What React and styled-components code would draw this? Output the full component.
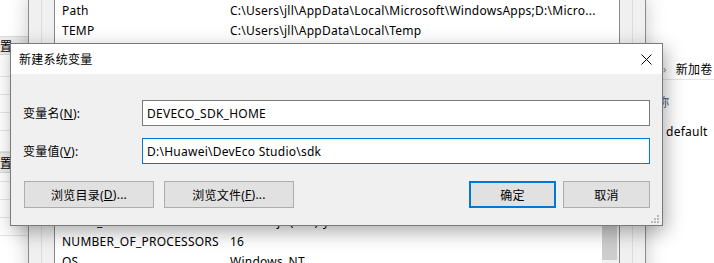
import React from "react";
import styled, { createGlobalStyle } from "styled-components";

const UI = '"Noto Sans", "Noto Sans CJK SC", sans-serif';

const Global = createGlobalStyle`
  html, body { margin: 0; padding: 0; background: #fff; }
  body { font-family: ${UI}; font-size: 12px; color: #000; letter-spacing: 0.25px; }
  * { box-sizing: border-box; }
`;

const Desktop = styled.div`
  position: relative;
  width: 714px;
  height: 263px;
  overflow: hidden;
  background: #fff;
`;

/* ---------- left background window ---------- */
const SideWindow = styled.div`
  position: absolute;
  left: 0;
  top: 0;
  width: 40px;
  height: 263px;
  background: #fff;
  display: flex;
  flex-direction: column;
  padding-top: 36px;
`;

const SideHeader = styled.div`
  height: ${(p) => p.h}px;
  flex: none;
  background: #ececec;
  border-top: 1px solid #d9d9d9;
  border-bottom: 1px solid #d9d9d9;
  display: flex;
  align-items: center;
  gap: 6px;
  font-size: 12px;
  color: #000;
`;

const SideDots = styled.span`
  width: 2px;
  height: 6px;
  border-left: 1px dotted #999;
`;

const SideRow = styled.div`
  height: ${(p) => p.h}px;
  flex: none;
  border-bottom: 1px solid #e6e6e6;
`;

/* ---------- environment variables window ---------- */
const EnvWindow = styled.div`
  position: absolute;
  left: 28px;
  top: -3px;
  width: 618px;
  height: 290px;
  background: #f0f0f0;
  border-left: 1px solid #8c8c8c;
  border-right: 1px solid #8c8c8c;
  box-shadow: 0 0 18px rgba(0, 0, 0, 0.22);
  padding: 0 12px;
  display: flex;
`;

const Group = styled.div`
  flex: 1;
  border-left: 1px solid #dcdcdc;
  border-right: 1px solid #dcdcdc;
  padding: 2px 12px 0 12px;
  display: flex;
  flex-direction: column;
  gap: 49px;
`;

const ListBox = styled.div`
  height: ${(p) => p.h}px;
  flex: none;
  background: #fff;
  border: 1px solid #828790;
  display: flex;
  overflow: hidden;
`;

const Rows = styled.div`
  flex: 1;
  display: flex;
  flex-direction: column;
`;

const Row = styled.div`
  height: 20px;
  flex: none;
  display: flex;
  align-items: center;
  padding-left: 7px;
  white-space: nowrap;
  font-size: 12px;
`;

const NameCell = styled.span`
  width: 168px;
  flex: none;
`;

const ValueCell = styled.span`
  flex: 1;
  overflow: hidden;
`;

const ScrollBar = styled.div`
  width: 17px;
  flex: none;
  background: #f0f0f0;
  display: flex;
  flex-direction: column;
  padding-top: 39px;
`;

const Thumb = styled.div`
  width: 15px;
  height: 70px;
  background: #cdcdcd;
`;

/* ---------- explorer window (right) ---------- */
const Explorer = styled.div`
  position: absolute;
  left: 645px;
  top: 0;
  width: 90px;
  height: 263px;
  background: #fff;
  display: flex;
  flex-direction: column;
  padding-top: 58px;
`;

const Crumb = styled.div`
  height: 22px;
  flex: none;
  display: flex;
  align-items: center;
  gap: 9px;
  padding-left: 18px;
  border-bottom: 1px solid #e5e5e5;
  white-space: nowrap;
  font-size: 12px;
`;

const CrumbArrow = styled.span`
  color: #8a8a8a;
  font-size: 11px;
`;

const ColHeader = styled.div`
  height: 26px;
  margin-top: 9px;
  flex: none;
  display: flex;
  align-items: center;
  padding-left: 0;
  color: #4c607a;
  font-size: 12px;
  white-space: nowrap;
`;

const FileRow = styled.div`
  height: 24px;
  margin-top: 4px;
  flex: none;
  display: flex;
  align-items: center;
  padding-left: 21px;
  font-size: 12px;
`;

/* ---------- dialog ---------- */
const Dialog = styled.div`
  position: absolute;
  left: 10px;
  top: 43px;
  width: 653px;
  height: 183px;
  border: 1px solid #7a7a7a;
  background: #f0f0f0;
  box-shadow: 3px 6px 18px rgba(0, 0, 0, 0.32);
  display: flex;
  flex-direction: column;
`;

const TitleBar = styled.div`
  height: 30px;
  flex: none;
  background: #fff;
  display: flex;
  align-items: center;
  justify-content: space-between;
  padding: 0 10px 0 8px;
  font-size: 12px;
`;

const Body = styled.div`
  flex: 1;
  display: flex;
  flex-direction: column;
  padding: 26px 12px 0 12px;
`;

const FieldRow = styled.div`
  display: flex;
  align-items: center;
  height: 26px;
  margin-bottom: ${(p) => p.mb || 0}px;
`;

const Label = styled.label`
  width: 119px;
  flex: none;
  font-size: 12px;
`;

const Input = styled.div`
  flex: 1;
  height: 26px;
  background: #fff;
  border: 1px solid ${(p) => (p.focused ? "#0078d7" : "#7a7a7a")};
  display: flex;
  align-items: center;
  padding-left: 4px;
  font-size: 12px;
  white-space: nowrap;
`;

const ButtonRow = styled.div`
  margin-top: 17px;
  display: flex;
  justify-content: space-between;
  padding: 0 0 0 1px;
`;

const ButtonGroup = styled.div`
  display: flex;
  gap: ${(p) => p.gap}px;
`;

const Button = styled.div`
  width: ${(p) => p.w}px;
  height: 27px;
  background: #e1e1e1;
  border: ${(p) => (p.primary ? "2px solid #0078d7" : "1px solid #adadad")};
  display: flex;
  align-items: center;
  justify-content: center;
  font-size: 12px;
  white-space: nowrap;
`;

const Grip = styled.svg`
  position: absolute;
  right: 2px;
  bottom: 1px;
`;

const CloseIcon = () => (
  <svg width="11" height="11" viewBox="0 0 11 11">
    <path d="M0.5 0.5 L10.5 10.5 M10.5 0.5 L0.5 10.5" stroke="#000" strokeWidth="1" fill="none" />
  </svg>
);

export default function App() {
  return (
    <>
      <Global />
      <Desktop>
        <Explorer>
          <Crumb>
            <CrumbArrow>›</CrumbArrow>
            <span>新加卷 (D:)</span>
          </Crumb>
          <ColHeader>名称</ColHeader>
          <FileRow>default</FileRow>
        </Explorer>

        <SideWindow>
          <SideHeader h={19}>
            <span>置</span>
            <SideDots />
          </SideHeader>
          <SideRow h={22} />
          <SideRow h={18} />
          <SideRow h={18} />
          <SideRow h={18} />
          <SideRow h={21} />
          <SideHeader h={21}>
            <span>置</span>
          </SideHeader>
          <SideRow h={9} />
          <SideRow h={18} />
          <SideRow h={18} />
          <SideRow h={18} />
        </SideWindow>

        <EnvWindow>
          <Group>
            <ListBox h={102}>
              <Rows>
                <Row>
                  <NameCell>Path</NameCell>
                  <ValueCell>C:\Users\jll\AppData\Local\Microsoft\WindowsApps;D:\Micro...</ValueCell>
                </Row>
                <Row>
                  <NameCell>TEMP</NameCell>
                  <ValueCell>C:\Users\jll\AppData\Local\Temp</ValueCell>
                </Row>
                <Row>
                  <NameCell>TMP</NameCell>
                  <ValueCell>C:\Users\jll\AppData\Local\Temp</ValueCell>
                </Row>
              </Rows>
            </ListBox>
            <ListBox h={140}>
              <Rows>
                <Row>
                  <NameCell>ComSpec</NameCell>
                  <ValueCell>C:\Windows\system32\cmd.exe</ValueCell>
                </Row>
                <Row>
                  <NameCell>DriverData</NameCell>
                  <ValueCell>C:\Windows\System32\Drivers\DriverData</ValueCell>
                </Row>
                <Row>
                  <NameCell>JAVA_HOME</NameCell>
                  <ValueCell>C:\Program Files (x86)\Java\jdk</ValueCell>
                </Row>
                <Row>
                  <NameCell>NODE_HOME</NameCell>
                  <ValueCell>D:\nodejs (x64)\y</ValueCell>
                </Row>
                <Row>
                  <NameCell>NUMBER_OF_PROCESSORS</NameCell>
                  <ValueCell>16</ValueCell>
                </Row>
                <Row>
                  <NameCell>OS</NameCell>
                  <ValueCell>Windows_NT</ValueCell>
                </Row>
              </Rows>
              <ScrollBar>
                <Thumb />
              </ScrollBar>
            </ListBox>
          </Group>
        </EnvWindow>

        <Dialog>
          <TitleBar>
            <span>新建系统变量</span>
            <CloseIcon />
          </TitleBar>
          <Body>
            <FieldRow mb={12}>
              <Label>
                变量名(<u>N</u>):
              </Label>
              <Input>DEVECO_SDK_HOME</Input>
            </FieldRow>
            <FieldRow>
              <Label>
                变量值(<u>V</u>):
              </Label>
              <Input focused>D:\Huawei\DevEco Studio\sdk</Input>
            </FieldRow>
            <ButtonRow>
              <ButtonGroup gap={10}>
                <Button w={130}>
                  浏览目录(<u>D</u>)...
                </Button>
                <Button w={130}>
                  浏览文件(<u>F</u>)...
                </Button>
              </ButtonGroup>
              <ButtonGroup gap={7}>
                <Button w={87} primary>
                  确定
                </Button>
                <Button w={87}>取消</Button>
              </ButtonGroup>
            </ButtonRow>
          </Body>
          <Grip width="9" height="9" viewBox="0 0 9 9">
            <rect x="6" y="0" width="2" height="2" fill="#b8b8b8" />
            <rect x="3" y="3" width="2" height="2" fill="#b8b8b8" />
            <rect x="6" y="3" width="2" height="2" fill="#b8b8b8" />
            <rect x="0" y="6" width="2" height="2" fill="#b8b8b8" />
            <rect x="3" y="6" width="2" height="2" fill="#b8b8b8" />
            <rect x="6" y="6" width="2" height="2" fill="#b8b8b8" />
          </Grip>
        </Dialog>
      </Desktop>
    </>
  );
}
